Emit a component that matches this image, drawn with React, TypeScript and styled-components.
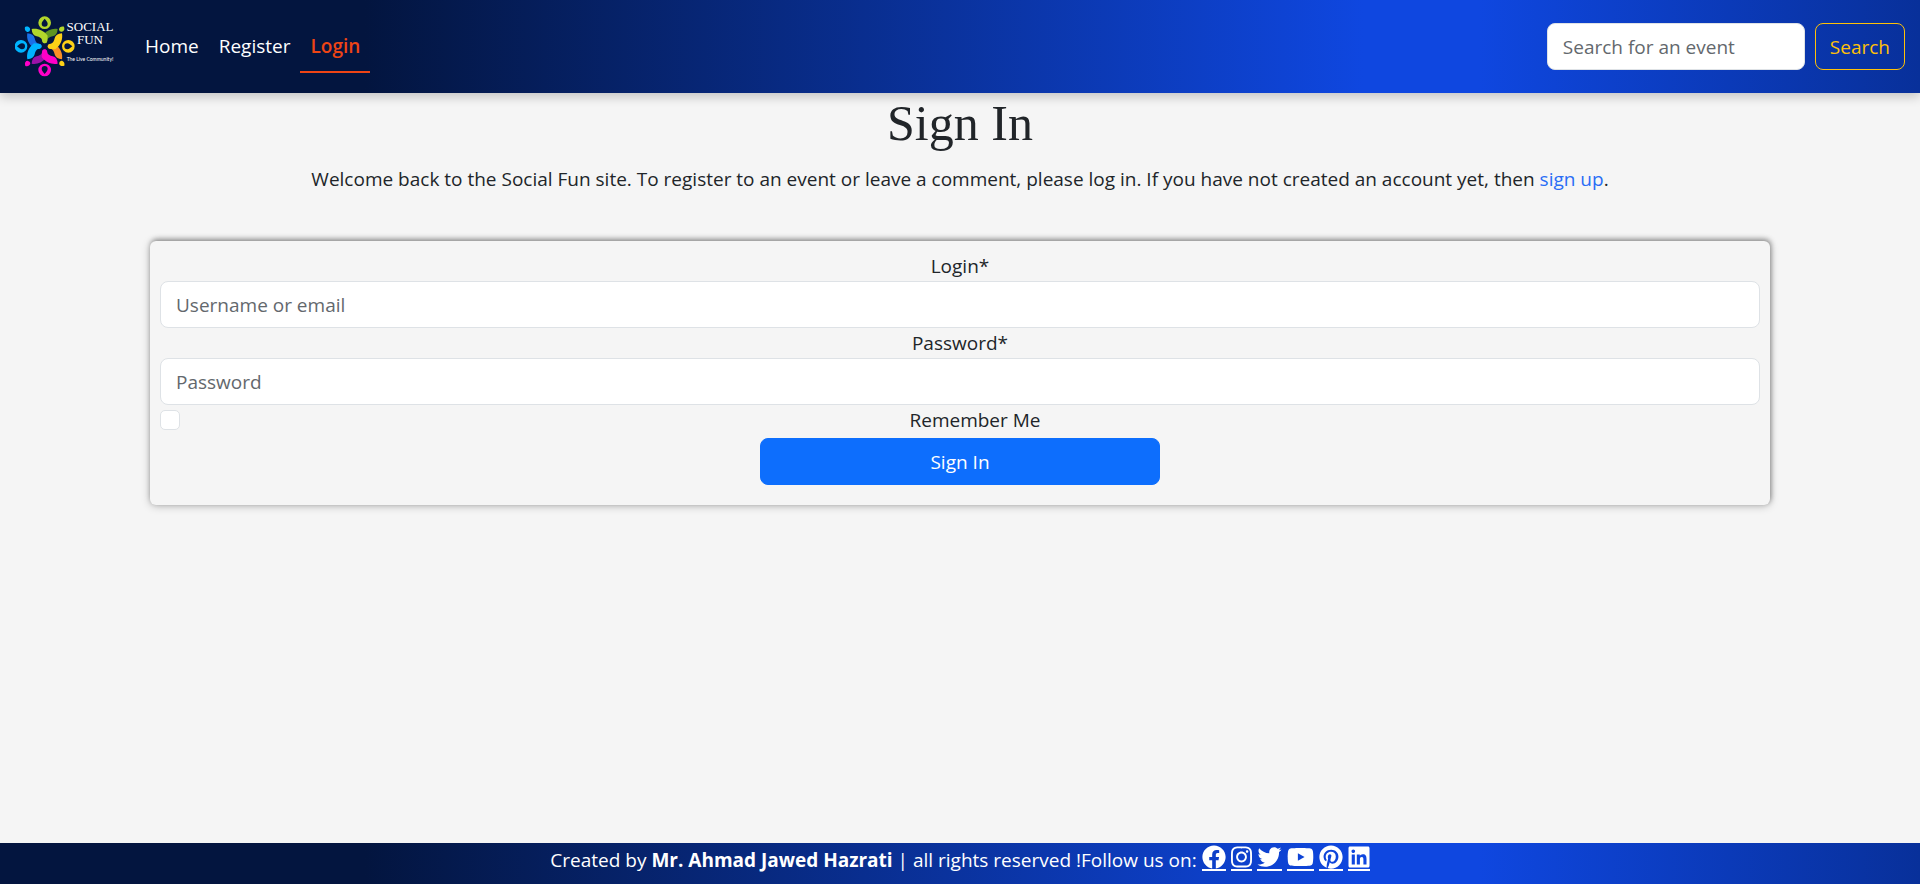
import React from "react";
import styled, { createGlobalStyle } from "styled-components";
import { FaFacebook, FaInstagram, FaTwitter, FaYoutube, FaPinterest, FaLinkedin } from "react-icons/fa";

const GlobalStyle = createGlobalStyle`
  *, *::before, *::after { box-sizing: border-box; }
  body {
    margin: 0;
    background: #f5f5f5;
    color: #212529;
    font-family: "Open Sans", "Noto Sans", sans-serif;
    font-size: 19px;
    line-height: 30px;
  }
  input, button { font: inherit; }
`;

const brandGradient = "linear-gradient(90deg, #03153f 19%, #0f47e0 71%, #0f47e0 77%, #08309a 100%)";

const Page = styled.div`
  min-height: 100vh;
  display: flex;
  flex-direction: column;
`;

const Header = styled.header`
  display: flex;
  align-items: center;
  justify-content: space-between;
  padding: 10px 15px;
  background: ${brandGradient};
  box-shadow: 0 4px 10px rgba(0, 0, 0, 0.2);
`;

const Nav = styled.nav`
  display: flex;
  align-items: center;
`;

const Brand = styled.a`
  display: flex;
  margin-right: 17px;
`;

const NavLink = styled.a<{ $active?: boolean }>`
  padding: 10px;
  color: ${(p) => (p.$active ? "#ee4415" : "#fff")};
  font-weight: ${(p) => (p.$active ? 600 : 500)};
  border-bottom: 2px solid ${(p) => (p.$active ? "#ee4415" : "transparent")};
  text-decoration: none;
`;

const SearchForm = styled.form`
  display: flex;
  gap: 10px;
`;

const TextInput = styled.input`
  width: 100%;
  height: 47px;
  padding: 0 15px;
  border: 1px solid #dee2e6;
  border-radius: 8px;
  background: #fff;
  color: #212529;
  &::placeholder { color: #63686d; opacity: 1; }
`;

const SearchInput = styled(TextInput)`
  width: 258px;
`;

const Button = styled.button`
  height: 47px;
  padding: 0 14px;
  border: 1px solid #ffc107;
  border-radius: 8px;
  background: transparent;
  color: #ffc107;
  cursor: pointer;
`;

const SubmitButton = styled(Button)`
  width: 400px;
  max-width: 100%;
  border-color: #0d6efd;
  background: #0d6efd;
  color: #fff;
`;

const Main = styled.main`
  flex: 1;
  display: flex;
  flex-direction: column;
  align-items: center;
  text-align: center;
`;

const Title = styled.h1`
  margin: 0 0 11px;
  font-family: "Liberation Serif", serif;
  font-size: 50px;
  font-weight: 500;
  line-height: 60px;
`;

const Intro = styled.p`
  margin: 0;
  padding: 0 15px;
`;

const TextLink = styled.a`
  color: #2a6df5;
  text-decoration: none;
`;

const Card = styled.form`
  width: calc(100% - 300px);
  margin-top: 47px;
  padding: 10px 10px 20px;
  display: flex;
  flex-direction: column;
  align-items: center;
  border-radius: 6px;
  box-shadow: 1px -2px 5px rgba(0, 0, 0, 0.35), 0 1px 8px rgba(0, 0, 0, 0.25);
`;

const Field = styled.div`
  width: 100%;
`;

const Label = styled.label`
  display: block;
`;

const CheckRow = styled.div`
  width: 100%;
  display: grid;
  grid-template-columns: 20px 1fr;
  column-gap: 10px;
  margin-bottom: 3px;
`;

const Checkbox = styled.input`
  appearance: none;
  width: 20px;
  height: 20px;
  margin: 5px 0 0;
  border: 1px solid #dee2e6;
  border-radius: 5px;
  background: #fff;
  &:checked { background: #0d6efd; }
`;

const Footer = styled.footer`
  display: flex;
  justify-content: center;
  gap: 5px;
  min-height: 41px;
  padding-top: 2px;
  background: ${brandGradient};
  color: #fff;
`;

const Socials = styled.div`
  display: flex;
  gap: 5px;
`;

const SocialLink = styled.a<{ $width: number }>`
  width: ${(p) => p.$width}px;
  height: 26px;
  display: flex;
  align-items: flex-end;
  color: #fff;
  border-bottom: 2px solid #fff;

  svg {
    width: 100%;
    height: 24px;
  }
`;

const people = [
  { turn: 0, main: "#b2d62b", shade: "#5f9422" },
  { turn: 90, main: "#fdd117", shade: "#f98f25" },
  { turn: 180, main: "#ff00c8", shade: "#9c12a8" },
  { turn: 270, main: "#00b4ff", shade: "#1b6fe6" },
];

function Logo() {
  return (
    <svg width="103" height="73" viewBox="45 30 309 219" role="img" aria-label="Social Fun">
      {people.map(({ turn, main, shade }) => (
        <g key={turn} transform={`rotate(${turn} 134 139)`}>
          <path
            fill={main}
            fillRule="evenodd"
            d="M134 49a19 19 0 1 0 0 38a19 19 0 1 0 0-38ZM134 56C138 61 143 66 143 71A9 9 0 0 1 125 71C125 66 130 61 134 56Z"
          />
          <path fill={shade} d="M173 87C156 84 142 91 132 102L126 116Q127 130 134 130Q142 130 142 121C142 114 150 111 158 109Q172 106 173 87Z" />
          <path fill={main} d="M95 87C112 84 130 90 143 107L142 122Q141 130 134 130Q127 130 126 121C126 114 118 111 110 109Q96 106 95 87Z" />
          <path fill={main} d="M192 80C184 78 177 82 177 89A8 8 0 0 0 192 91C194 88 193 84 192 80Z" />
        </g>
      ))}
      <g fill="#fff" textAnchor="middle">
        <text x="270" y="93" fontFamily="Liberation Serif, serif" fontSize="39">SOCIAL</text>
        <text x="270" y="132" fontFamily="Liberation Serif, serif" fontSize="39">FUN</text>
        <text x="270" y="182" fontFamily="Lato, sans-serif" fontSize="15">The Live Community!</text>
      </g>
    </svg>
  );
}

const socials = [
  { name: "Facebook", Icon: FaFacebook, width: 24 },
  { name: "Instagram", Icon: FaInstagram, width: 21 },
  { name: "Twitter", Icon: FaTwitter, width: 25 },
  { name: "YouTube", Icon: FaYoutube, width: 27 },
  { name: "Pinterest", Icon: FaPinterest, width: 24 },
  { name: "LinkedIn", Icon: FaLinkedin, width: 22 },
];

export default function App() {
  return (
    <Page>
      <GlobalStyle />
      <Header>
        <Nav>
          <Brand href="#"><Logo /></Brand>
          <NavLink href="#">Home</NavLink>
          <NavLink href="#">Register</NavLink>
          <NavLink href="#" $active>Login</NavLink>
        </Nav>
        <SearchForm>
          <SearchInput type="search" placeholder="Search for an event" aria-label="Search for an event" />
          <Button type="button">Search</Button>
        </SearchForm>
      </Header>
      <Main>
        <Title>Sign In</Title>
        <Intro>
          Welcome back to the Social Fun site. To register to an event or leave a comment, please log in. If you have not
          created an account yet, then <TextLink href="#">sign up</TextLink>.
        </Intro>
        <Card>
          <Field>
            <Label htmlFor="login">Login*</Label>
            <TextInput id="login" type="text" placeholder="Username or email" />
          </Field>
          <Field>
            <Label htmlFor="password">Password*</Label>
            <TextInput id="password" type="password" placeholder="Password" />
          </Field>
          <CheckRow>
            <Checkbox id="remember" type="checkbox" />
            <Label htmlFor="remember">Remember Me</Label>
          </CheckRow>
          <SubmitButton type="button">Sign In</SubmitButton>
        </Card>
      </Main>
      <Footer>
        <span>Created by <b>Mr. Ahmad Jawed Hazrati</b> | all rights reserved !Follow us on:</span>
        <Socials>
          {socials.map(({ name, Icon, width }) => (
            <SocialLink key={name} href="#" aria-label={name} $width={width}><Icon /></SocialLink>
          ))}
        </Socials>
      </Footer>
    </Page>
  );
}
